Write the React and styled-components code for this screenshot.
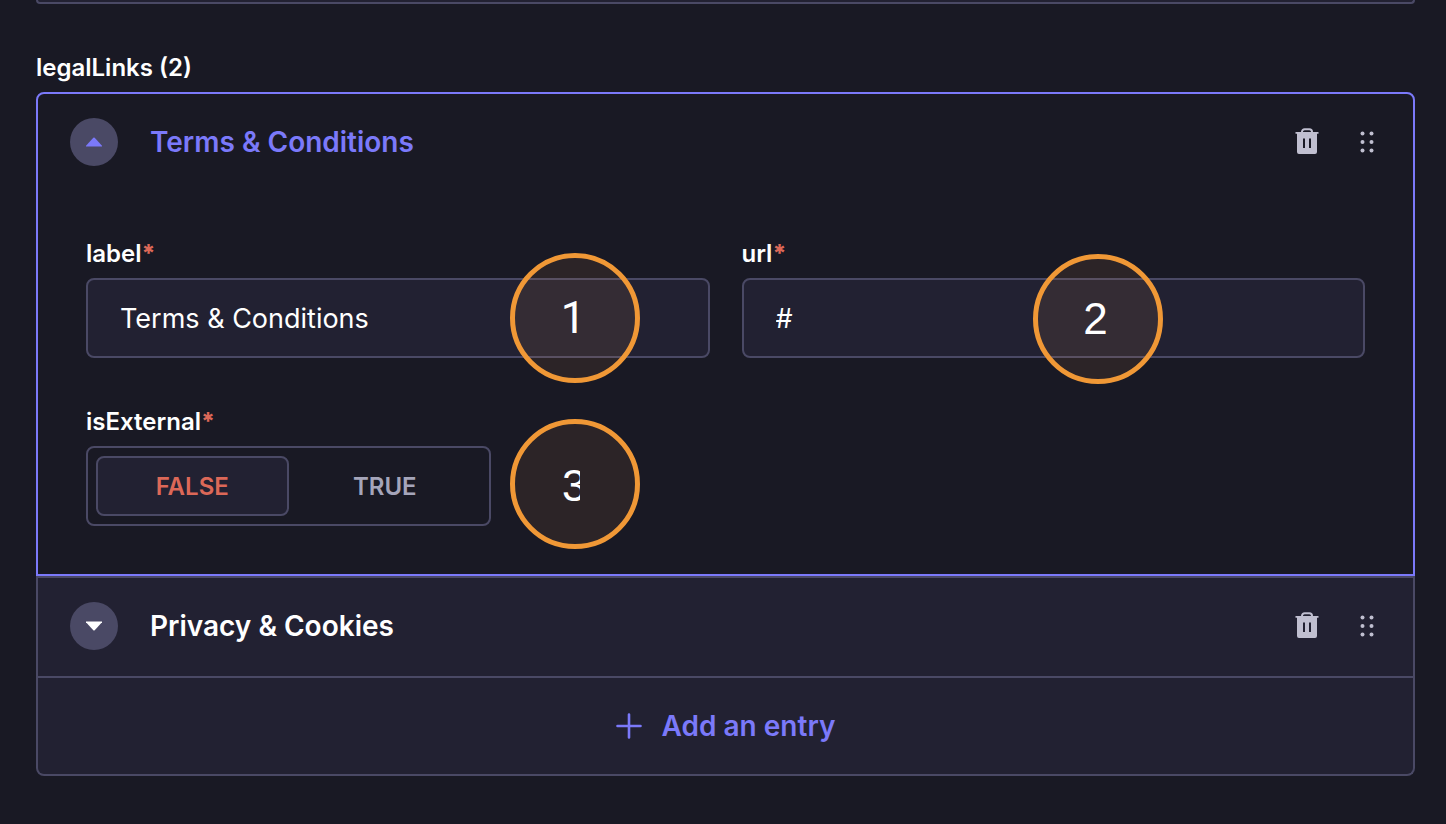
import React, { useState } from 'react';

import styled, { createGlobalStyle } from 'styled-components';

const entries = [
  { id: 'terms', title: 'Terms & Conditions', url: '#' },
  { id: 'privacy', title: 'Privacy & Cookies', url: '#' },
];

const TrashIcon = () => (
  <svg width='24' height='28' viewBox='0 0 24 28' aria-hidden='true'>
    <path d='M7 5V3.8A2.6 2.6 0 0 1 9.6 1.2h4.8A2.6 2.6 0 0 1 17 3.8V5' fill='none' stroke='#c0bfd0' strokeWidth='2' />
    <path
      d='M0.5 4h23v1.8H22V24a2 2 0 0 1-2 2H4a2 2 0 0 1-2-2V5.8H0.5zM8 10.5v9.5h2v-9.5zM14 10.5v9.5h2v-9.5z'
      fill='#c0bfd0'
      fillRule='evenodd'
    />
  </svg>
);

const DragIcon = () => (
  <svg width='14' height='22' viewBox='0 0 14 22' fill='#c0bfd0' aria-hidden='true'>
    {[2.5, 11, 19.5].map((y) => (
      <React.Fragment key={y}>
        <circle cx='2.5' cy={y} r='2' />
        <circle cx='11.5' cy={y} r='2' />
      </React.Fragment>
    ))}
  </svg>
);

const CaretIcon = ({ up }) => (
  <svg width='16' height='10' viewBox='0 0 16 10' fill='currentColor' aria-hidden='true'>
    <path d={up ? 'M0 9.5V8.7L7.3 0.8Q8 0.2 8.7 0.8L16 8.7V9.5z' : 'M0 0.5V1.3L7.3 9.2Q8 9.8 8.7 9.2L16 1.3V0.5z'} />
  </svg>
);

const PlusIcon = () => (
  <svg width='26' height='26' viewBox='0 0 26 26' aria-hidden='true'>
    <path d='M13 1.5v23M1.5 13h23' fill='none' stroke='currentColor' strokeWidth='2.6' strokeLinecap='round' />
  </svg>
);

const EntryHeader = ({ title, open, onToggle }) => (
  <Header>
    <ToggleButton type='button' $open={open} onClick={onToggle} aria-label={title} aria-expanded={open}>
      <CaretIcon up={open} />
    </ToggleButton>
    <Title $open={open}>{title}</Title>
    <Actions>
      <IconButton type='button' aria-label='Delete'>
        <TrashIcon />
      </IconButton>
      <IconButton type='button' aria-label='Drag'>
        <DragIcon />
      </IconButton>
    </Actions>
  </Header>
);

const TextField = ({ id, label, defaultValue, children }) => (
  <Field>
    <Label htmlFor={id}>
      {label}
      <Required>*</Required>
    </Label>
    <Control>
      <TextInput id={id} type='text' defaultValue={defaultValue} />
      {children}
    </Control>
  </Field>
);

const EntryForm = ({ entry }) => {
  const [external, setExternal] = useState(false);

  return (
    <Form>
      <TextField id={`${entry.id}-label`} label='label' defaultValue={entry.title}>
        <Marker $left={424} $top={-25}>
          <Digit $font='Roboto'>1</Digit>
        </Marker>
      </TextField>
      <TextField id={`${entry.id}-url`} label='url' defaultValue={entry.url}>
        <Marker $left={291} $top={-24}>
          <Digit>2</Digit>
        </Marker>
      </TextField>
      <Field>
        <Label as='span' id={`${entry.id}-external`}>
          isExternal
          <Required>*</Required>
        </Label>
        <Control>
          <Switch role='group' aria-labelledby={`${entry.id}-external`}>
            <Option type='button' $active={!external} $color='#dc6858' onClick={() => setExternal(false)}>
              FALSE
            </Option>
            <Option type='button' $active={external} $color='#7b79fa' onClick={() => setExternal(true)}>
              TRUE
            </Option>
          </Switch>
          <Marker $left={424} $top={-27} $drop={4}>
            <Digit $clip>3</Digit>
          </Marker>
        </Control>
      </Field>
    </Form>
  );
};

const App = () => {
  const [openId, setOpenId] = useState('terms');

  return (
    <Page>
      <GlobalStyle />
      <PreviousField />
      <ListLabel>legalLinks (2)</ListLabel>
      {entries.map((entry) => {
        const open = entry.id === openId;
        return (
          <Entry key={entry.id} $open={open}>
            <EntryHeader title={entry.title} open={open} onToggle={() => setOpenId(open ? null : entry.id)} />
            {open && <EntryForm entry={entry} />}
          </Entry>
        );
      })}
      <AddButton type='button'>
        <PlusIcon />
        Add an entry
      </AddButton>
    </Page>
  );
};

const GlobalStyle = createGlobalStyle`
  * {
    box-sizing: border-box;
  }

  body {
    margin: 0;
    background: #191924;
    color: #ffffff;
    font-family: Inter, 'Liberation Sans', sans-serif;
  }

  button, input {
    font-family: inherit;
  }
`;

const Page = styled.main`
  padding: 0 31px 48px 36px;
`;

const PreviousField = styled.div`
  height: 4px;
  border: 2px solid #4a4965;
  border-top: 0;
  border-radius: 0 0 8px 8px;
  background: #222132;
`;

const ListLabel = styled.h2`
  margin: 48px 0 8px;
  font-size: 24px;
  font-weight: 600;
  line-height: 32px;
`;

const Entry = styled.section`
  border: 2px solid ${({ $open }) => ($open ? '#7b79fa' : '#4a4965')};
  background: ${({ $open }) => ($open ? '#191924' : '#222132')};

  ${ListLabel} + & {
    border-radius: 8px 8px 0 0;
  }
`;

const Header = styled.header`
  display: flex;
  align-items: center;
  height: 98px;
  padding: 0 37px 2px 32px;
`;

const ToggleButton = styled.button`
  display: flex;
  align-items: center;
  justify-content: center;
  width: 48px;
  height: 48px;
  padding: 0;
  border: 0;
  border-radius: 50%;
  background: #4a4965;
  color: ${({ $open }) => ($open ? '#7b79fa' : '#ffffff')};
`;

const Title = styled.h3`
  flex: 1;
  margin: 0 0 0 32px;
  color: ${({ $open }) => ($open ? '#7b79fa' : '#ffffff')};
  font-size: 28px;
  font-weight: 600;
  line-height: 36px;
`;

const Actions = styled.div`
  display: flex;
  align-items: center;
  gap: 37px;
`;

const IconButton = styled.button`
  display: flex;
  padding: 2px;
  border: 0;
  background: none;
`;

const Form = styled.form`
  display: grid;
  grid-template-columns: 1fr 1fr;
  gap: 48px 32px;
  padding: 46px 48px 48px;
`;

const Field = styled.div`
  display: flex;
  flex-direction: column;
  gap: 8px;
`;

const Label = styled.label`
  display: block;
  height: 32px;
  font-size: 24px;
  font-weight: 600;
  line-height: 32px;
`;

const Required = styled.span`
  color: #dc6858;
  font-weight: 800;
`;

const Control = styled.div`
  position: relative;
`;

const TextInput = styled.input`
  display: block;
  width: 100%;
  height: 80px;
  padding: 0 32px;
  border: 2px solid #4a4965;
  border-radius: 8px;
  background: #222132;
  color: #ffffff;
  font-size: 27px;
`;

const Switch = styled.div`
  display: grid;
  grid-template-columns: 1fr 1fr;
  width: 405px;
  height: 80px;
  padding: 8px;
  border: 2px solid #4a4965;
  border-radius: 8px;
`;

const Option = styled.button`
  padding: 0;
  border: 2px solid ${({ $active }) => ($active ? '#4a4965' : 'transparent')};
  border-radius: 8px;
  background: ${({ $active }) => ($active ? '#222132' : 'transparent')};
  color: ${({ $active, $color }) => ($active ? $color : '#a5a5ba')};
  font-size: 24px;
  font-weight: 600;
`;

const Marker = styled.span`
  position: absolute;
  top: ${({ $top }) => $top}px;
  left: ${({ $left }) => $left}px;
  display: flex;
  align-items: center;
  justify-content: center;
  width: 130px;
  height: 130px;
  padding: ${({ $drop }) => $drop || 0}px 4px 0 0;
  border: 5px solid #f09836;
  border-radius: 50%;
  background: rgba(240, 160, 80, 0.09);
  pointer-events: none;
`;

const Digit = styled.span`
  width: ${({ $clip }) => ($clip ? '18px' : 'auto')};
  margin-right: ${({ $clip }) => ($clip ? '4px' : '0')};
  overflow: ${({ $clip }) => ($clip ? 'hidden' : 'visible')};
  font-family: ${({ $font }) => $font || "'Liberation Sans'"}, sans-serif;
  font-size: 44px;
  line-height: 52px;
`;

const AddButton = styled.button`
  display: flex;
  align-items: center;
  justify-content: center;
  gap: 20px;
  width: 100%;
  height: 98px;
  padding: 0;
  border: 2px solid #4a4965;
  border-top: 0;
  border-radius: 0 0 8px 8px;
  background: #222132;
  color: #7b79fa;
  font-size: 28px;
  font-weight: 600;
`;

export default App;
